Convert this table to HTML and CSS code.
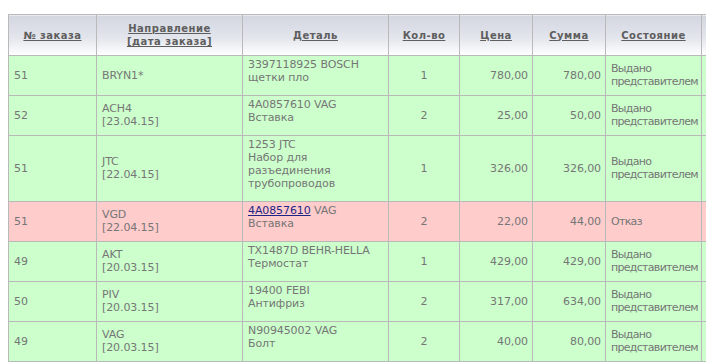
FILE: index.html
```html
<!DOCTYPE html>
<html lang="ru">
<head>
<meta charset="utf-8">
<title>Заказы</title>
<link rel="stylesheet" href="styles.css">
</head>
<body>
<div class="wrap">
<table class="orders">
  <colgroup>
    <col class="c-num"><col class="c-dir"><col class="c-part"><col class="c-qty"><col class="c-price"><col class="c-sum"><col class="c-state"><col class="c-extra">
  </colgroup>
  <thead>
    <tr>
      <th><a href="#">№ заказа</a></th>
      <th><a href="#">Направление<br>[дата заказа]</a></th>
      <th><a href="#">Деталь</a></th>
      <th><a href="#">Кол-во</a></th>
      <th><a href="#">Цена</a></th>
      <th><a href="#">Сумма</a></th>
      <th><a href="#">Состояние</a></th>
      <th></th>
    </tr>
  </thead>
  <tbody>
    <tr class="ok">
      <td>51</td>
      <td>BRYN1*</td>
      <td class="part">3397118925 BOSCH<br>щетки пло</td>
      <td class="qty">1</td>
      <td class="num">780,00</td>
      <td class="num">780,00</td>
      <td class="state">Выдано<br>представителем</td>
      <td></td>
    </tr>
    <tr class="ok">
      <td>52</td>
      <td>ACH4<br>[23.04.15]</td>
      <td class="part">4A0857610 VAG<br>Вставка</td>
      <td class="qty">2</td>
      <td class="num">25,00</td>
      <td class="num">50,00</td>
      <td class="state">Выдано<br>представителем</td>
      <td></td>
    </tr>
    <tr class="ok">
      <td>51</td>
      <td>JTC<br>[22.04.15]</td>
      <td class="part">1253 JTC<br>Набор для<br>разъединения<br>трубопроводов</td>
      <td class="qty">1</td>
      <td class="num">326,00</td>
      <td class="num">326,00</td>
      <td class="state">Выдано<br>представителем</td>
      <td></td>
    </tr>
    <tr class="refused">
      <td>51</td>
      <td>VGD<br>[22.04.15]</td>
      <td class="part"><a class="plink" href="#">4A0857610</a> VAG<br>Вставка</td>
      <td class="qty">2</td>
      <td class="num">22,00</td>
      <td class="num">44,00</td>
      <td class="state">Отказ</td>
      <td></td>
    </tr>
    <tr class="ok">
      <td>49</td>
      <td>AKT<br>[20.03.15]</td>
      <td class="part">TX1487D BEHR-HELLA<br>Термостат</td>
      <td class="qty">1</td>
      <td class="num">429,00</td>
      <td class="num">429,00</td>
      <td class="state">Выдано<br>представителем</td>
      <td></td>
    </tr>
    <tr class="ok">
      <td>50</td>
      <td>PIV<br>[20.03.15]</td>
      <td class="part">19400 FEBI<br>Антифриз</td>
      <td class="qty">2</td>
      <td class="num">317,00</td>
      <td class="num">634,00</td>
      <td class="state">Выдано<br>представителем</td>
      <td></td>
    </tr>
    <tr class="ok">
      <td>49</td>
      <td>VAG<br>[20.03.15]</td>
      <td class="part">N90945002 VAG<br>Болт</td>
      <td class="qty">2</td>
      <td class="num">40,00</td>
      <td class="num">80,00</td>
      <td class="state">Выдано<br>представителем</td>
      <td></td>
    </tr>
  </tbody>
</table>
</div>
</body>
</html>
```
FILE: styles.css
```css
html {
  overflow: hidden;
  background: #fff;
}
body {
  margin: 14px 0 0 8px;
  font-family: "DejaVu Sans", Verdana, sans-serif;
  font-size: 11px;
  line-height: 13px;
  color: #767676;
}
.wrap {
  overflow: hidden;
}
.orders {
  border-collapse: collapse;
  table-layout: fixed;
  width: 753px;
}
.c-num { width: 88px; }
.c-dir { width: 146px; }
.c-part { width: 146px; }
.c-qty { width: 71px; }
.c-price { width: 73px; }
.c-sum { width: 73px; }
.c-state { width: 96px; }
.c-extra { width: 60px; }

.orders th,
.orders td {
  border: 1px solid #b9b9b9;
}
.orders th {
  height: 40px;
  padding: 0 4px;
  background: linear-gradient(to bottom, #d2d6e0 0%, #e3e5ec 55%, #ffffff 100%);
  font-size: 10px;
  line-height: 13px;
  font-weight: bold;
  letter-spacing: 0.5px;
  text-align: center;
  vertical-align: middle;
}
.orders th a {
  color: #5e5e5e;
  text-decoration: underline;
}
.orders td {
  padding: 6px 5px 7px 5px;
  vertical-align: middle;
  text-align: left;
  white-space: nowrap;
  letter-spacing: -0.1px;
}
.orders td.part {
  vertical-align: top;
  padding: 2px 5px 11px 5px;
}
.orders td.qty {
  text-align: center;
}
.orders td.num {
  text-align: right;
  padding-right: 4px;
}
.orders td.state {
  padding: 6px 1px 7px 5px;
  letter-spacing: -0.7px;
}
.ok td {
  background: #ccffcc;
}
.refused td {
  background: #ffcccc;
}
.plink {
  color: #1f2585;
  text-decoration: underline;
}
```
